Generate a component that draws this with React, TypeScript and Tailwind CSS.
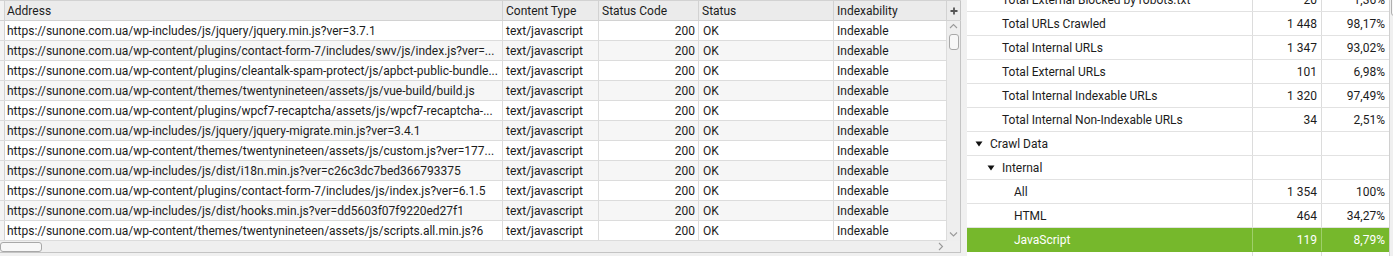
import React from "react";

const urls = [
  "https://sunone.com.ua/wp-includes/js/jquery/jquery.min.js?ver=3.7.1",
  "https://sunone.com.ua/wp-content/plugins/contact-form-7/includes/swv/js/index.js?ver=...",
  "https://sunone.com.ua/wp-content/plugins/cleantalk-spam-protect/js/apbct-public-bundle...",
  "https://sunone.com.ua/wp-content/themes/twentynineteen/assets/js/vue-build/build.js",
  "https://sunone.com.ua/wp-content/plugins/wpcf7-recaptcha/assets/js/wpcf7-recaptcha-...",
  "https://sunone.com.ua/wp-includes/js/jquery/jquery-migrate.min.js?ver=3.4.1",
  "https://sunone.com.ua/wp-content/themes/twentynineteen/assets/js/custom.js?ver=177...",
  "https://sunone.com.ua/wp-includes/js/dist/i18n.min.js?ver=c26c3dc7bed366793375",
  "https://sunone.com.ua/wp-content/plugins/contact-form-7/includes/js/index.js?ver=6.1.5",
  "https://sunone.com.ua/wp-includes/js/dist/hooks.min.js?ver=dd5603f07f9220ed27f1",
  "https://sunone.com.ua/wp-content/themes/twentynineteen/assets/js/scripts.all.min.js?6",
];

type RRow = { label: string; n: string; p: string; indent: number; tri?: boolean; sel?: boolean };

const rrows: RRow[] = [
  { label: "Total External Blocked by robots.txt", n: "20", p: "1,36%", indent: 35 },
  { label: "Total URLs Crawled", n: "1 448", p: "98,17%", indent: 35 },
  { label: "Total Internal URLs", n: "1 347", p: "93,02%", indent: 35 },
  { label: "Total External URLs", n: "101", p: "6,98%", indent: 35 },
  { label: "Total Internal Indexable URLs", n: "1 320", p: "97,49%", indent: 35 },
  { label: "Total Internal Non-Indexable URLs", n: "34", p: "2,51%", indent: 35 },
  { label: "Crawl Data", n: "", p: "", indent: 8, tri: true },
  { label: "Internal", n: "", p: "", indent: 20, tri: true },
  { label: "All", n: "1 354", p: "100%", indent: 47 },
  { label: "HTML", n: "464", p: "34,27%", indent: 47 },
  { label: "JavaScript", n: "119", p: "8,79%", indent: 47, sel: true },
  { label: "", n: "", p: "", indent: 47 },
];

function Chevron({ dir }: { dir: "up" | "down" | "right" }) {
  const pts =
    dir === "up" ? "1,5 4.5,1.5 8,5" : dir === "down" ? "1,1.5 4.5,5 8,1.5" : "2,1 5.5,4.5 2,8";
  const w = dir === "right" ? 7 : 9;
  const h = dir === "right" ? 9 : 6.5;
  return (
    <svg width={w} height={h} viewBox={`0 0 ${w} ${h}`}>
      <polyline points={pts} fill="none" stroke="#9a9a9a" strokeWidth="1.1" />
    </svg>
  );
}

function Tri() {
  return (
    <svg width="8" height="6" viewBox="0 0 8 6" className="shrink-0">
      <polygon points="0.5,0.5 7.5,0.5 4,5.5" fill="#111" />
    </svg>
  );
}

export default function App() {
  return (
    <div className="w-[1393px] h-[256px] overflow-hidden bg-[#f0f0f0] flex font-['Roboto',sans-serif] text-[12px] text-[#1c1c1c] leading-none">
      {/* Left panel */}
      <div className="w-[961px] shrink-0 flex flex-col">
        {/* header */}
        <div className="flex h-[21px] border-t border-b border-[#d2d2d2] bg-[#ebebeb]">
          <div className="w-[5px] border-r border-[#d2d2d2] bg-[#f2f2f2]" />
          <div className="w-[498px] border-r border-[#d2d2d2] pl-[2px] flex items-center">Address</div>
          <div className="w-[96px] border-r border-[#d2d2d2] pl-[3px] flex items-center">Content Type</div>
          <div className="w-[100px] border-r border-[#d2d2d2] pl-[3px] flex items-center">Status Code</div>
          <div className="w-[135px] border-r border-[#d2d2d2] pl-[3px] flex items-center">Status</div>
          <div className="w-[113px] border-r border-[#d2d2d2] pl-[3px] flex items-center">Indexability</div>
          <div className="w-[14px] border-r border-[#c4c4c4] flex items-center justify-center">
            <svg width="8" height="8" viewBox="0 0 8 8">
              <path d="M4 0.5V7.5M0.5 4H7.5" stroke="#555" strokeWidth="1.8" />
            </svg>
          </div>
        </div>
        {/* body */}
        <div className="flex h-[220px]">
          <div className="flex flex-col">
            {urls.map((u, i) => (
              <div
                key={i}
                className={`flex h-[20px] border-b border-[#dcdcdc] ${i % 2 === 0 ? "bg-white" : "bg-[#f6f6f6]"}`}
              >
                <div className="w-[5px] border-r border-[#d2d2d2] bg-[#f4f4f4]" />
                <div className="w-[498px] border-r border-[#dcdcdc] pl-[2px] flex items-center whitespace-nowrap overflow-hidden">
                  {u}
                </div>
                <div className="w-[96px] border-r border-[#dcdcdc] pl-[3px] flex items-center">text/javascript</div>
                <div className="w-[100px] border-r border-[#dcdcdc] pr-[3px] flex items-center justify-end">200</div>
                <div className="w-[135px] border-r border-[#dcdcdc] pl-[4px] flex items-center">OK</div>
                <div className="w-[113px] border-r border-[#dcdcdc] pl-[3px] flex items-center">Indexable</div>
              </div>
            ))}
          </div>
          <div className="w-[14px] border-r border-[#c4c4c4] bg-[#eeeeee] flex flex-col items-center pt-[2px] pb-[4px]">
            <Chevron dir="up" />
            <div className="mt-[4px] w-[10px] h-[16px] rounded-[3px] border border-[#a8a8a8] bg-[#f7f7f7]" />
            <div className="flex-1" />
            <Chevron dir="down" />
          </div>
        </div>
        {/* horizontal scrollbar */}
        <div className="flex h-[12px] border-b border-r border-[#c4c4c4] bg-[#efefef] items-center">
          <div className="w-[42px] h-[10px] rounded-[3px] border border-[#a8a8a8] bg-[#f7f7f7]" />
          <div className="flex-1" />
          <div className="w-[7px] mr-[16px] flex items-center">
            <Chevron dir="right" />
          </div>
        </div>
      </div>

      {/* gap */}
      <div className="w-[6px] shrink-0" />

      {/* Right panel */}
      <div className="flex-1 flex">
        <div className="w-[422px] shrink-0 bg-white flex flex-col">
          {rrows.map((r, i) => (
            <div
              key={i}
              className={`flex h-[24px] shrink-0 border-b ${i === 0 ? "-mt-[12px]" : ""} ${
                r.sel ? "bg-[#76b82c] text-white border-[#76b82c]" : "border-[#e2e2e2]"
              }`}
            >
              <div
                className={`w-[286px] border-r flex items-center ${r.sel ? "border-[#9fcf6a]" : "border-[#dcdcdc]"}`}
                style={{ paddingLeft: r.indent }}
              >
                {r.tri && (
                  <span className="mr-[7px] flex items-center">
                    <Tri />
                  </span>
                )}
                <span className="whitespace-nowrap">{r.label}</span>
              </div>
              <div
                className={`w-[69px] border-r pr-[4px] flex items-center justify-end ${r.sel ? "border-[#9fcf6a]" : "border-[#dcdcdc]"}`}
              >
                {r.n}
              </div>
              <div className="w-[67px] pr-[4px] flex items-center justify-end">{r.p}</div>
            </div>
          ))}
        </div>
        <div className="flex-1 border-l border-[#d0d0d0] bg-[#f0f0f0] relative">
          <div className="absolute left-[1px] top-[-4px] w-[8px] h-[20px] rounded-[3px] border border-[#b0b0b0] bg-[#f7f7f7]" />
        </div>
      </div>
    </div>
  );
}
